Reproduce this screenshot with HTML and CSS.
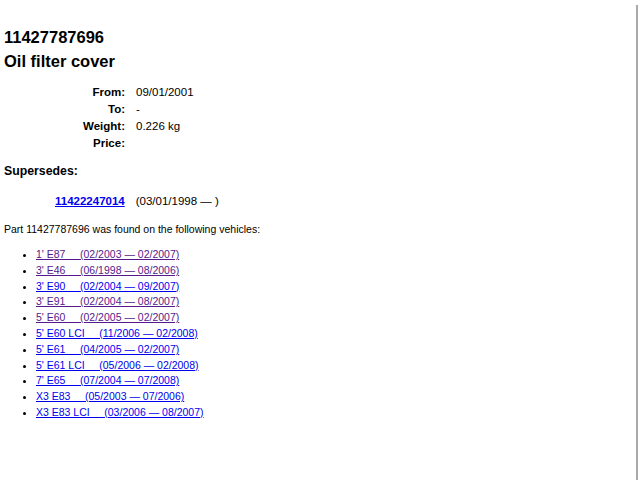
FILE: index.html
```html
<!DOCTYPE html>
<html lang="en">
<head>
    <meta charset="UTF-8">
    <title>11427787696 Oil filter cover</title>
    <link rel="stylesheet" href="styles.css">
</head>
<body>
    <h1 class="part-number">11427787696</h1>
    <h2 class="part-name">Oil filter cover</h2>

    <!-- Part details -->
    <div class="details">
        <span class="label">From:</span><span class="value">09/01/2001</span>
        <span class="label">To:</span><span class="value">-</span>
        <span class="label">Weight:</span><span class="value">0.226 kg</span>
        <span class="label">Price:</span><span class="value"></span>
    </div>

    <h3 class="section-title">Supersedes:</h3>
    <div class="supersedes">
        <a href="#" class="part-link">11422247014</a>
        <span>(03/01/1998 &mdash; )</span>
    </div>

    <p class="found">Part 11427787696 was found on the following vehicles:</p>

    <ul class="vehicles">
        <li><a href="#" class="visited">1' E87&nbsp;&nbsp;&nbsp;&nbsp; (02/2003 &mdash; 02/2007)</a></li>
        <li><a href="#" class="visited">3' E46&nbsp;&nbsp;&nbsp;&nbsp; (06/1998 &mdash; 08/2006)</a></li>
        <li><a href="#">3' E90&nbsp;&nbsp;&nbsp;&nbsp; (02/2004 &mdash; 09/2007)</a></li>
        <li><a href="#" class="visited">3' E91&nbsp;&nbsp;&nbsp;&nbsp; (02/2004 &mdash; 08/2007)</a></li>
        <li><a href="#" class="visited">5' E60&nbsp;&nbsp;&nbsp;&nbsp; (02/2005 &mdash; 02/2007)</a></li>
        <li><a href="#">5' E60 LCI&nbsp;&nbsp;&nbsp;&nbsp; (11/2006 &mdash; 02/2008)</a></li>
        <li><a href="#">5' E61&nbsp;&nbsp;&nbsp;&nbsp; (04/2005 &mdash; 02/2007)</a></li>
        <li><a href="#">5' E61 LCI&nbsp;&nbsp;&nbsp;&nbsp; (05/2006 &mdash; 02/2008)</a></li>
        <li><a href="#">7' E65&nbsp;&nbsp;&nbsp;&nbsp; (07/2004 &mdash; 07/2008)</a></li>
        <li><a href="#">X3 E83&nbsp;&nbsp;&nbsp;&nbsp; (05/2003 &mdash; 07/2006)</a></li>
        <li><a href="#">X3 E83 LCI&nbsp;&nbsp;&nbsp;&nbsp; (03/2006 &mdash; 08/2007)</a></li>
    </ul>

    <div class="scrollbar"></div>
</body>
</html>
```

FILE: styles.css
```css
/* General Body Styles */
body {
    font-family: "Liberation Sans", Arial, Helvetica, sans-serif;
    font-size: 10.5px;
    color: #000;
    background-color: #fff;
    margin: 0;
    padding: 0 4px;
}

/* Headings */
.part-number,
.part-name {
    font-size: 16.5px;
    font-weight: bold;
    line-height: 19px;
    margin: 0;
}

.part-number {
    margin-top: 28px;
}

.part-name {
    margin-top: 5px;
}

/* Details table */
.details {
    display: grid;
    grid-template-columns: 121px auto;
    column-gap: 11px;
    row-gap: 4px;
    margin-top: 15px;
    font-size: 11.5px;
    line-height: 13px;
}

.label {
    font-weight: bold;
    text-align: right;
}

.section-title {
    font-size: 12.3px;
    font-weight: bold;
    line-height: 14px;
    margin: 14px 0 0;
}

.supersedes {
    display: flex;
    gap: 11px;
    padding-left: 51px;
    margin-top: 17px;
    font-size: 11.5px;
    line-height: 13px;
}

.part-link {
    font-weight: bold;
    color: #0000ee;
}

.found {
    margin: 15px 0 0;
    line-height: 13px;
}

/* Vehicle list */
.vehicles {
    margin: 11px 0 0;
    padding-left: 32px;
    line-height: 15.8px;
}

.vehicles a {
    color: #0000ee;
}

.vehicles a.visited {
    color: #551a8b;
}

/* Overlay scrollbar */
.scrollbar {
    position: fixed;
    top: 5px;
    bottom: 0;
    right: 2px;
    width: 2px;
    background-color: #a9a9a9;
}
```
